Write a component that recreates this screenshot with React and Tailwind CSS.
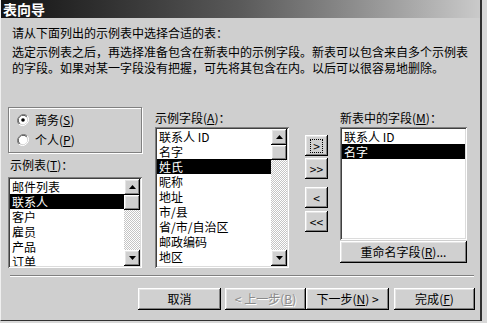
const raised =
  "bg-[#d0d0d0] shadow-[inset_-1px_-1px_#000,inset_1px_1px_#fff,inset_-2px_-2px_#808080,inset_2px_2px_#e4e4e4]";
const sunken =
  "bg-white p-[2px] shadow-[inset_1px_1px_#808080,inset_-1px_-1px_#fff,inset_2px_2px_#404040,inset_-2px_-2px_#dcdcdc]";

function Key({ children }) {
  return (
    <span>
      (<span className="underline">{children}</span>)
    </span>
  );
}

function Arrow({ down }) {
  return (
    <svg width="7" height="4" viewBox="0 0 7 4">
      <path d={down ? "M0 0h7L3.5 4z" : "M3.5 0L7 4H0z"} fill="#000" />
    </svg>
  );
}

function ScrollBar() {
  return (
    <div className="flex w-[16px] flex-col">
      <div className={`flex h-[16px] items-center justify-center ${raised}`}>
        <Arrow />
      </div>
      <div className={`h-[15px] ${raised}`} />
      <div className="flex-1 bg-[repeating-conic-gradient(#ffffff_0%_25%,#c4c4c4_0%_50%)] bg-size-[2px_2px]" />
      <div className={`flex h-[16px] items-center justify-center ${raised}`}>
        <Arrow down />
      </div>
    </div>
  );
}

function ListBox({ items, selected, scroll, className }) {
  return (
    <div className={`flex ${sunken} ${className}`}>
      <div className="flex-1 overflow-hidden">
        {items.map((it, i) => (
          <div
            key={it}
            className={`h-[15px] overflow-hidden whitespace-nowrap px-[2px] leading-[15px] ${
              i === selected ? "bg-black text-white" : ""
            }`}
          >
            {it}
          </div>
        ))}
      </div>
      {scroll && <ScrollBar />}
    </div>
  );
}

function Radio({ checked, label, k }) {
  return (
    <div className="flex h-[20px] items-center gap-[6px]">
      <svg width="12" height="12" viewBox="0 0 12 12">
        <path d="M10.2 1.8A6 6 0 0 0 1.8 10.2" fill="none" stroke="#808080" strokeWidth="1" />
        <path d="M9.5 2.5A5 5 0 0 0 2.5 9.5" fill="none" stroke="#303030" strokeWidth="1" />
        <path d="M1.8 10.2A6 6 0 0 0 10.2 1.8" fill="none" stroke="#fff" strokeWidth="1" />
        <circle cx="6" cy="6" r="4.3" fill="#fff" />
        {checked && <circle cx="6" cy="6" r="1.8" fill="#000" />}
      </svg>
      <span>
        {label}
        <Key>{k}</Key>
      </span>
    </div>
  );
}

function Btn({ children, className = "", focus }) {
  return (
    <div className={`flex items-center justify-center ${raised} ${className}`}>
      {focus ? (
        <span className="border border-dotted border-black px-[2px] leading-[12px]">{children}</span>
      ) : (
        children
      )}
    </div>
  );
}

export default function App() {
  return (
    <div
      className="h-[323px] w-[487px] bg-[#d8d8d8] text-[12px] text-black"
      style={{ fontFamily: '"Noto Sans CJK SC", "Liberation Sans", sans-serif' }}
    >
      <div className="flex h-[321px] w-[482px] flex-col border-r-2 border-b border-r-[#303030] border-b-[#303030] border-l border-l-[#f0f0f0] bg-[#cfcfcf]">
        {/* Title */}
        <div className="flex h-[18px] items-center bg-gradient-to-r from-[#141414] via-[#5a5a5a] to-[#cacaca] pl-[2px] text-[14px] font-bold leading-none text-white">
          表向导
        </div>

        {/* Intro */}
        <div className="mt-[7px] pl-[11px] leading-[16px]">
          <p>请从下面列出的示例表中选择合适的表：</p>
          <p className="mt-[3px]">
            选定示例表之后，再选择准备包含在新表中的示例字段。新表可以包含来自多个示例表
            <br />
            的字段。如果对某一字段没有把握，可先将其包含在内。以后可以很容易地删除。
          </p>
        </div>

        {/* Main */}
        <div className="mt-[31px] flex items-start pl-[7px]">
          <div className="flex w-[134px] flex-col">
            <div className="h-[46px] border border-[#808080] px-[8px] pt-[2px] shadow-[1px_1px_0_#fff,inset_1px_1px_0_#fff]">
              <Radio checked label="商务" k="S" />
              <Radio label="个人" k="P" />
            </div>
            <div className="mt-[4px] h-[16px] pl-[2px] leading-[16px]">
              示例表<Key>T</Key>：
            </div>
            <ListBox
              className="mt-[4px] h-[91px] w-[134px]"
              items={["邮件列表", "联系人", "客户", "雇员", "产品", "订单"]}
              selected={1}
              scroll
            />
          </div>

          <div className="ml-[13px] flex w-[134px] flex-col">
            <div className="mt-[3px] h-[16px] leading-[16px]">
              示例字段<Key>A</Key>：
            </div>
            <ListBox
              className="mt-[1px] h-[141px] w-[134px]"
              items={["联系人 ID", "名字", "姓氏", "昵称", "地址", "市/县", "省/市/自治区", "邮政编码", "地区"]}
              selected={2}
              scroll
            />
          </div>

          <div className="ml-[16px] mt-[28px] flex w-[23px] flex-col">
            <Btn focus className="h-[21px]">&gt;</Btn>
            <Btn className="mt-[2px] h-[21px]">&gt;&gt;</Btn>
            <Btn className="mt-[8px] h-[21px]">&lt;</Btn>
            <Btn className="mt-[3px] h-[21px]">&lt;&lt;</Btn>
          </div>

          <div className="ml-[12px] flex w-[127px] flex-col">
            <div className="mt-[3px] h-[16px] leading-[16px]">
              新表中的字段<Key>M</Key>：
            </div>
            <ListBox
              className="mt-[1px] h-[113px] w-[127px]"
              items={["联系人 ID", "名字"]}
              selected={1}
            />
            <Btn className="mt-[1px] h-[22px]">
              重命名字段<Key>R</Key>...
            </Btn>
          </div>
        </div>

        {/* Separator */}
        <div className="ml-[9px] mt-[7px] h-[2px] w-[464px] border-t border-b border-t-[#808080] border-b-white" />

        {/* Buttons */}
        <div className="mt-[11px] flex pl-[137px]">
          <Btn className="h-[22px] w-[83px]">取消</Btn>
          <Btn className="ml-[4px] h-[22px] w-[81px] text-[#8a8a8a] [text-shadow:1px_1px_0_#fff]">
            &lt; 上一步<Key>B</Key>
          </Btn>
          <Btn className="h-[22px] w-[83px]">
            下一步<Key>N</Key>&nbsp;&gt;
          </Btn>
          <Btn className="ml-[5px] h-[22px] w-[81px]">
            完成<Key>F</Key>
          </Btn>
        </div>
      </div>
    </div>
  );
}
